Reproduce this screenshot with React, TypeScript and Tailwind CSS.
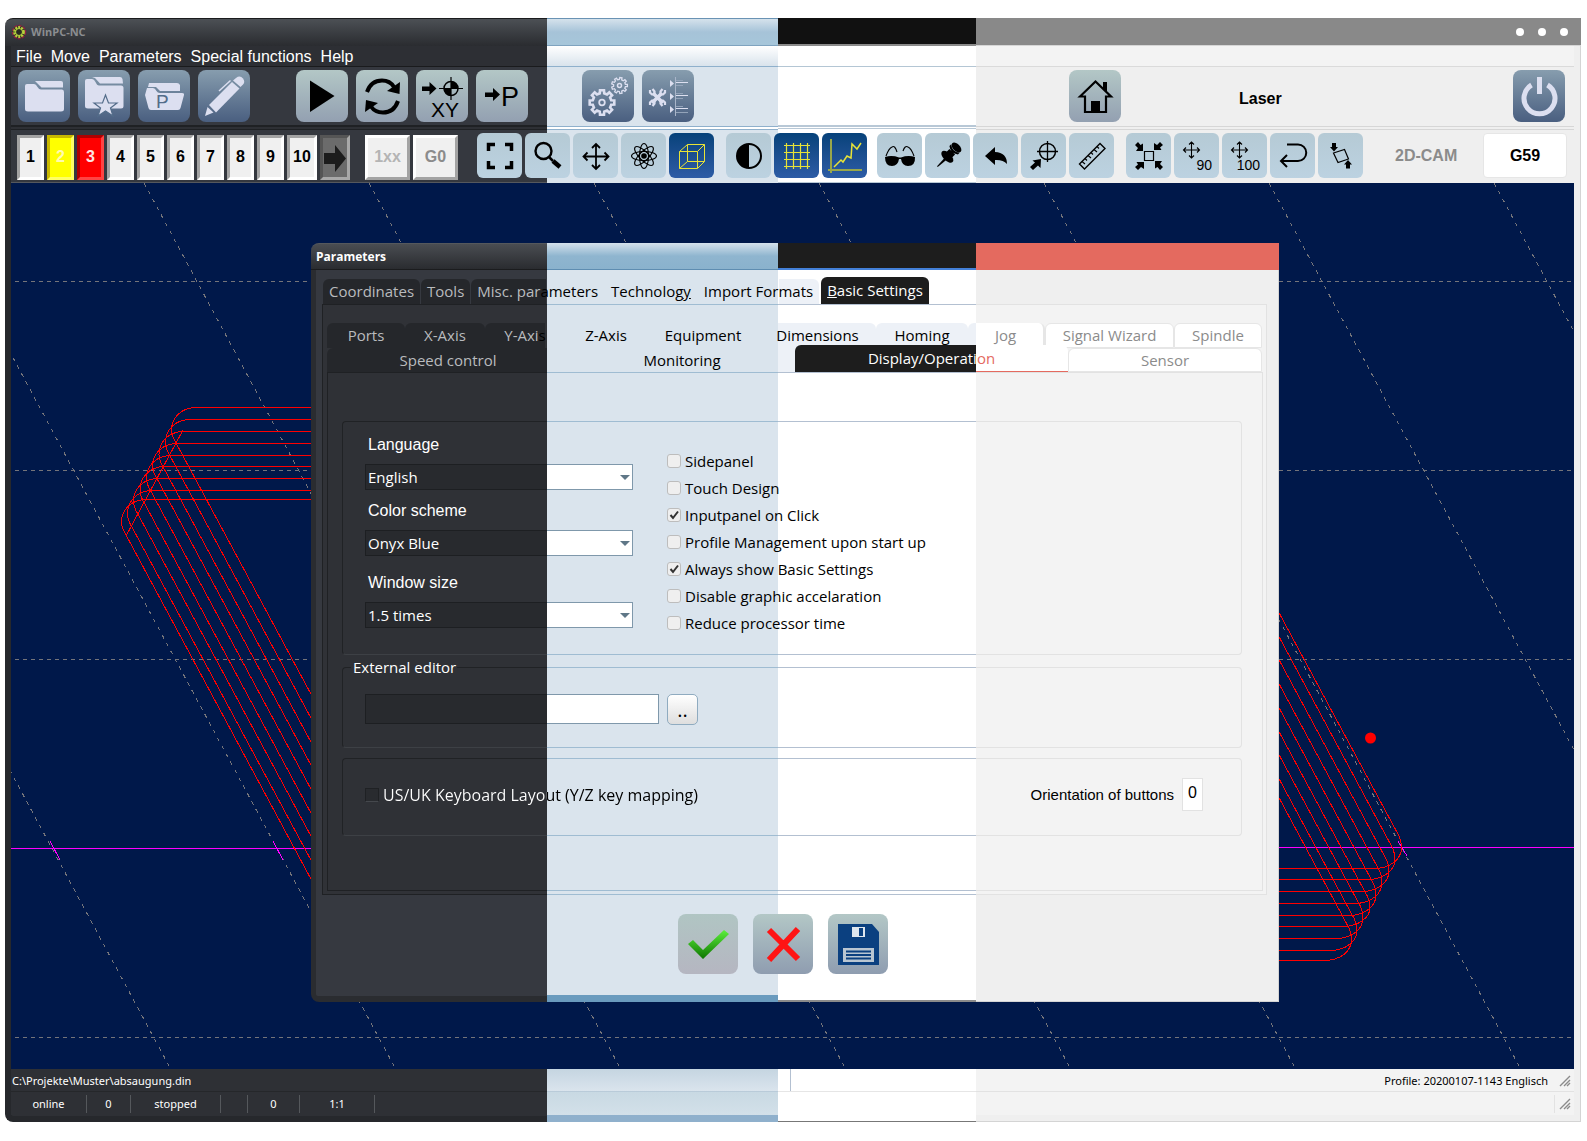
import { useState } from 'react';
import type { ReactNode } from 'react';
import clsx from 'clsx';

type Four = [string, string, string, string];

// A box whose background runs through the four colour schemes from left to right
function Banded({
  cols,
  bands,
  className,
  children,
}: {
  cols: string;
  bands: Four;
  className?: string;
  children?: ReactNode;
}) {
  return (
    <div className="grid grid-cols-1">
      <div className={clsx('col-start-1 row-start-1 grid', cols)}>
        {bands.map((band, i) => (
          <div key={i} className={band} />
        ))}
      </div>
      <div className={clsx('col-start-1 row-start-1 min-w-0', className)}>{children}</div>
    </div>
  );
}

const WINDOW_COLS = 'grid-cols-[542px_231px_198px_1fr]';
const BODY_COLS = 'grid-cols-[536px_231px_198px_1fr]';
const DIALOG_COLS = 'grid-cols-[236px_231px_198px_1fr]';
const TABS_COLS = 'grid-cols-[225px_231px_198px_1fr]';
const PAGE_COLS = 'grid-cols-[220px_231px_198px_1fr]';
const GROUP_COLS = 'grid-cols-[205px_231px_198px_1fr]';

/* ---------- icons ---------- */

const LIGHT = '#dcdff0';
const YELLOW = '#e8e337';

function Icon({ size, children }: { size: number; children: ReactNode }) {
  return (
    <svg width={size} height={size} viewBox={`0 0 ${size} ${size}`} fill="none" aria-hidden="true">
      {children}
    </svg>
  );
}

function gearPath(cx: number, cy: number, outer: number, inner: number, teeth: number) {
  const points: string[] = [];
  const step = (Math.PI * 2) / teeth;
  for (let i = 0; i < teeth; i++) {
    const a = i * step;
    const corners = [
      [inner, a - step * 0.3],
      [outer, a - step * 0.2],
      [outer, a + step * 0.2],
      [inner, a + step * 0.3],
    ];
    corners.forEach(([r, t]) => points.push(`${(cx + r * Math.cos(t)).toFixed(1)} ${(cy + r * Math.sin(t)).toFixed(1)}`));
  }
  return `M${points.join('L')}Z`;
}

const openIcon = (
  <Icon size={52}>
    <path d="M17 11H43Q45 11 45 13V17.500H23.500L17.500 11.500Z" fill={LIGHT} />
    <path d="M9 14H16Q18 14 19.500 17Q21 19.500 23 19.500H44Q46 19.500 46 22V39Q46 41.500 43 41.500H10Q7 41.500 7 39V16Q7 14 9 14Z" fill={LIGHT} />
  </Icon>
);

const favouriteIcon = (
  <Icon size={52}>
    <path d="M14 7H42Q44 7 44.500 9L45 13.500H22L17 8Z" fill={LIGHT} />
    <path d="M9 9H14Q16 9 17.500 12Q19 15.500 21 15.500H43Q45.500 15.500 45.500 18V36Q45.500 38.500 43 38.500H10Q7 38.500 7 36V11Q7 9 9 9Z" fill={LIGHT} />
    <path d="M27.500 25L30.500 33H39L32.500 38L35 46L27.500 41L20 46L22.500 38L16 33H24.500Z" fill={LIGHT} stroke="#536c89" strokeWidth="1.200" />
  </Icon>
);

const projectIcon = (
  <Icon size={52}>
    <path d="M11 13H39Q41 13 42 15V21H22L18 17H10Z" fill={LIGHT} />
    <path d="M9 18H15Q17 18 18.500 21Q19.500 23 22 23H44Q46.500 23 46 25L42.500 38Q42 40 40 40H13Q11 40 10.500 38L7 25Z" fill={LIGHT} />
    <text x="18" y="38" fontSize="19" fontFamily="Liberation Sans, sans-serif" fill="#536c89">P</text>
  </Icon>
);

const editIcon = (
  <Icon size={52}>
    <path d="M7 46L9.500 37L15.500 42.500Z" fill={LIGHT} />
    <path d="M11 35L34 12L41.500 18.500L18 42.500Z" fill={LIGHT} />
    <path d="M35 10.500L38 8Q42 5 45 8.500Q47.500 12 45 14.500L42.500 17Z" fill={LIGHT} />
    <path d="M21 21L32.500 10.500" stroke={LIGHT} strokeWidth="1.500" />
  </Icon>
);

const playIcon = (
  <Icon size={52}>
    <path d="M14 10.500L38.500 26L14 42Z" fill="#000" />
  </Icon>
);

const repeatIcon = (
  <Icon size={52}>
    <path d="M11 22Q15 10.500 26 10.500Q34 10.500 38 17" stroke="#000" strokeWidth="4" />
    <path d="M44 12L43.500 24L31 21Z" fill="#000" />
    <path d="M42 31Q38 42.500 27 42.500Q19 42.500 15 36.500" stroke="#000" strokeWidth="4" />
    <path d="M9 42L10 30L22 33Z" fill="#000" />
  </Icon>
);

const zeroXyIcon = (
  <Icon size={52}>
    <path d="M6 16.500H13.500V12L20.500 18.500L13.500 25V21H6Z" fill="#000" />
    <circle cx="35" cy="18.500" r="7" stroke="#000" strokeWidth="1.500" />
    <path d="M35 7V30M23 18.500H47" stroke="#000" strokeWidth="1.200" />
    <path d="M35 18.500V11.500A7 7 0 0 1 42 18.500ZM35 18.500V25.500A7 7 0 0 1 28 18.500Z" fill="#000" />
    <text x="15" y="47" fontSize="21" fontFamily="Liberation Sans, sans-serif" fill="#000">XY</text>
  </Icon>
);

const parkIcon = (
  <Icon size={52}>
    <path d="M9 22.500H17V18L24 24.500L17 31V27H9Z" fill="#000" />
    <text x="25" y="36" fontSize="27" fontFamily="Liberation Sans, sans-serif" fill="#000">P</text>
  </Icon>
);

const gearsIcon = (
  <Icon size={52}>
    <path d={gearPath(20, 32.5, 12.5, 9.5, 8)} stroke={LIGHT} strokeWidth="2.600" />
    <circle cx="20" cy="32.500" r="2.800" stroke={LIGHT} strokeWidth="1.800" />
    <path d={gearPath(37.5, 15.5, 8, 6, 9)} stroke={LIGHT} strokeWidth="1.300" />
    <circle cx="37.500" cy="15.500" r="2" stroke={LIGHT} strokeWidth="1.500" />
  </Icon>
);

const setupIcon = (
  <Icon size={52}>
    <path d="M11 23L21 33M20 23L10 33" stroke={LIGHT} strokeWidth="3.500" />
    <path d="M8 20V22.500L10 24.500H12.500V21.500L10.500 19M23 20V22.500L21 24.500H18.500V21.500L20.500 19M8 35V32.500L10 30.500H12.500V33.500L10.500 36M23 35V32.500L21 30.500H18.500V33.500L20.500 36" stroke={LIGHT} strokeWidth="2.200" />
    <path d="M33.500 7V46" stroke="#a9b5c9" strokeWidth="1" />
    <path d="M28 10L32 13.500L28 17ZM28 23L32 26.500L28 30ZM28 36L32 39.500L28 43Z" fill={LIGHT} />
    <path d="M34 12.500H46M34 25.500H46M34 38.500H46" stroke={LIGHT} />
    <path d="M34 10.500H41M34 15.500H41M34 23.500H41M34 28.500H41M34 36.500H41M34 42.500H46" stroke="#93a3b9" />
  </Icon>
);

const homeIcon = (
  <Icon size={52}>
    <path d="M11 26.500L26.500 11.500L42 26.500H37V42H16V26.500Z" stroke="#000" strokeWidth="2.200" />
    <path d="M34 12H38V22L34 18ZM22 31H31V42H22Z" fill="#000" />
  </Icon>
);

const powerIcon = (
  <Icon size={52}>
    <path d="M18.500 15A15.500 15.500 0 1 0 34.500 15" stroke={LIGHT} strokeWidth="5" />
    <path d="M24 7H29V24H24Z" fill={LIGHT} />
  </Icon>
);

const fitIcon = (
  <Icon size={45}>
    <path d="M11.500 18V11.500H18M28 11.500H34.500V18M34.500 28V34.500H28M18 34.500H11.500V28" stroke="#000" strokeWidth="3.500" />
  </Icon>
);

const zoomIcon = (
  <Icon size={45}>
    <circle cx="18.500" cy="18" r="8" stroke="#000" strokeWidth="2.400" />
    <path d="M24 24L28 28" stroke="#000" strokeWidth="2.500" />
    <path d="M28 28L35 34" stroke="#000" strokeWidth="4.500" />
  </Icon>
);

const moveIcon = (
  <Icon size={45}>
    <path d="M23 11V36M10.500 23.500H35.500M19 15L23 11L27 15M19 32L23 36L27 32M14.500 19.500L10.500 23.500L14.500 27.500M31.500 19.500L35.500 23.500L31.500 27.500" stroke="#000" strokeWidth="1.800" />
  </Icon>
);

const atomIcon = (
  <Icon size={45}>
    {[0, 45, 90, 135].map((angle) => (
      <ellipse key={angle} cx="23" cy="23" rx="12.500" ry="4.500" stroke="#000" strokeWidth="1.100" transform={`rotate(${angle} 23 23)`} />
    ))}
    <circle cx="23" cy="23" r="2.800" fill="#000" />
    <circle cx="23" cy="23" r="5" stroke="#000" strokeWidth="1" />
  </Icon>
);

const cubeIcon = (
  <Icon size={45}>
    <path d="M10.500 18.500H28.500V35.500H10.500ZM18.500 11.500H35.500V28.500H18.500ZM10.500 18.500L18.500 11.500M28.500 18.500L35.500 11.500M28.500 35.500L35.500 28.500M10.500 35.500L18.500 28.500" stroke={YELLOW} />
  </Icon>
);

const contrastIcon = (
  <Icon size={45}>
    <circle cx="23" cy="23" r="12" stroke="#000" strokeWidth="2" />
    <path d="M23 11V35A12 12 0 0 1 23 11Z" fill="#000" />
  </Icon>
);

const gridIcon = (
  <Icon size={45}>
    <path d="M12.500 10V36M19.500 10V36M26.500 10V36M33.500 10V36M10 12.500H36M10 19.500H36M10 26.500H36M10 33.500H36" stroke={YELLOW} strokeWidth="1.200" />
  </Icon>
);

const chartIcon = (
  <Icon size={45}>
    <path d="M9 6V40M6 37H40" stroke="#99a74a" strokeWidth="2" />
    <path d="M12 34L15 31L19 27L21 29L25 23L29 25L30 11L35 16L39 10" stroke={YELLOW} strokeWidth="1.500" />
  </Icon>
);

const glassesIcon = (
  <Icon size={45}>
    <path d="M8 24Q15 22 22 24.500H24Q31 22 38 24Q38.500 33 31 33Q25 33 24 26H22Q21 33 15 33Q8 33 8 24Z" fill="#000" />
    <path d="M9 23Q12 15 15 14Q18 12 20 19M37 23Q34 15 31 14Q28 12 26 18" stroke="#000" strokeWidth="1.100" />
  </Icon>
);

const pinIcon = (
  <Icon size={45}>
    <g transform="rotate(45 23 23)" fill="#000">
      <ellipse cx="23" cy="11" rx="6" ry="3.500" />
      <path d="M17 12.500Q23 17.500 29 12.500V15Q23 19.500 17 15ZM19 17H27V23H19Z" />
      <ellipse cx="23" cy="24" rx="7.500" ry="4" />
      <path d="M22 27H24.500L23.500 38H22.500Z" />
    </g>
  </Icon>
);

const undoIcon = (
  <Icon size={45}>
    <path d="M12 23L22 14V19Q34 19.500 34 31Q30 26.500 22 27V32Z" fill="#000" />
  </Icon>
);

const targetIcon = (
  <Icon size={45}>
    <circle cx="26.500" cy="18.500" r="8" stroke="#000" strokeWidth="1.500" />
    <path d="M26.500 8V29M16 18.500H37" stroke="#000" strokeWidth="1.300" />
    <path d="M9 34L14 29.500L11.500 27.500L20 26L19.500 35L17 32.500L12 37Z" fill="#000" />
  </Icon>
);

const rulerIcon = (
  <Icon size={45}>
    <path d="M10.500 31L31 10.500L36 15.500L15.500 36Z" stroke="#000" strokeWidth="1.400" />
    <path d="M13 28.500L16 31M16 25.500L18 27.500M19 22.500L22 25M22 19.500L24 21.500M25 16.500L28 19M28 13.500L30 15.500" stroke="#000" strokeWidth="1.100" />
  </Icon>
);

const shrinkIcon = (
  <Icon size={45}>
    <path d="M18.500 18.500H27.500V27.500H18.500Z" stroke="#000" strokeWidth="1.200" />
    {[0, 90, 180, 270].map((angle) => (
      <path key={angle} d="M9 12L12 9L14.500 12L17 10.500V18H10L12 15Z" fill="#000" transform={`rotate(${angle} 23 23)`} />
    ))}
  </Icon>
);

function StepIcon({ label }: { label: string }) {
  return (
    <Icon size={45}>
      <path d="M17.500 9V25M9.500 17H25.500M15 11.500L17.500 9L20 11.500M15 22.500L17.500 25L20 22.500M12 14.500L9.500 17L12 19.500M23 14.500L25.500 17L23 19.500" stroke="#000" strokeWidth="1.100" />
      <text x="38" y="37" textAnchor="end" fontSize="14" fontFamily="Liberation Sans, sans-serif" fill="#000">{label}</text>
    </Icon>
  );
}

const returnIcon = (
  <Icon size={45}>
    <path d="M17 11.500H28A8 8 0 0 1 28 28H11M17 22L11 28L17 34" stroke="#000" strokeWidth="2" />
  </Icon>
);

const alignIcon = (
  <Icon size={45}>
    <path d="M15.500 20L26.500 16.500L30.500 26L20 29.500Z" stroke="#000" strokeWidth="1.200" />
    <path d="M14 10H18V14H20L16 18.500L12 14H14ZM28 35.500H32V31.500H34L30 27L26 31.500H28Z" fill="#000" />
  </Icon>
);

/* ---------- toolbar parts ---------- */

function BigButton({ label, tone, className, children }: { label: string; tone: 'slate' | 'pale'; className?: string; children: ReactNode }) {
  return (
    <button
      type="button"
      aria-label={label}
      className={clsx(
        'size-[52px] shrink-0 rounded-lg bg-linear-to-b',
        tone === 'slate' ? 'from-[#879dae] to-[#4a5f80]' : 'from-[#b3c7c6] to-[#93a0b1]',
        className,
      )}
    >
      {children}
    </button>
  );
}

function SmallButton({ label, active, children }: { label: string; active?: boolean; children: ReactNode }) {
  return (
    <button
      type="button"
      aria-label={label}
      aria-pressed={active}
      className={clsx(
        'size-[45px] shrink-0 rounded-md bg-linear-to-b',
        active ? 'from-[#06427a] to-[#2d5ca6]' : 'from-[#b5cad5] to-[#bcd2e1]',
      )}
    >
      {children}
    </button>
  );
}

const TOOLS = ['1', '2', '3', '4', '5', '6', '7', '8', '9', '10'];

function toolStyle(tool: string) {
  if (tool === '2') return 'w-[27px] border-t-[#c9b800] border-l-[#c9b800] border-r-[#ffff66] border-b-[#ffff66] bg-[#ff0] text-[#fffbb0]';
  if (tool === '3') return 'w-[27px] border-t-[#b00000] border-l-[#b00000] border-r-[#ff4444] border-b-[#ff4444] bg-[#f00] text-[#ffe5e5]';
  return clsx(tool === '10' ? 'w-[30px]' : 'w-[27px]', 'border-t-[#a3a3a3] border-l-[#a3a3a3] border-r-white border-b-white bg-[#f0f0f0] text-black');
}

const VIEW_GROUPS = [
  {
    margin: 'ml-[19px]',
    buttons: [
      { label: 'Fit to window', icon: fitIcon },
      { label: 'Zoom', icon: zoomIcon },
      { label: 'Pan', icon: moveIcon },
      { label: 'Orbit', icon: atomIcon },
      { label: '3D view', icon: cubeIcon, active: true },
    ],
  },
  {
    margin: 'ml-[12px]',
    buttons: [
      { label: 'Contrast', icon: contrastIcon },
      { label: 'Grid', icon: gridIcon, active: true },
      { label: 'Path', icon: chartIcon, active: true },
    ],
  },
  {
    margin: 'ml-[10px]',
    buttons: [
      { label: 'Preview', icon: glassesIcon },
      { label: 'Pin', icon: pinIcon },
      { label: 'Undo', icon: undoIcon },
      { label: 'Go to point', icon: targetIcon },
      { label: 'Measure', icon: rulerIcon },
    ],
  },
  {
    margin: 'ml-[12px]',
    buttons: [
      { label: 'Centre', icon: shrinkIcon },
      { label: 'Step 90', icon: <StepIcon label="90" /> },
      { label: 'Step 100', icon: <StepIcon label="100" /> },
      { label: 'Return', icon: returnIcon },
      { label: 'Align', icon: alignIcon },
    ],
  },
];

function TitleBar() {
  return (
    <Banded
      cols={WINDOW_COLS}
      bands={[
        'rounded-tl-lg border-t border-[#1b1c1e] bg-linear-to-b from-[#4c5055] to-[#2a2c30]',
        'border-y border-t-[#6a93b4] border-b-[#7fa3bf] bg-linear-to-b from-[#d5e2ec] via-[#a6c3d8] to-[#a6c6da]',
        'border-b-2 border-[#8b8b8b] bg-[#111]',
        'border-b border-[#d6d6d6] bg-[#898989]',
      ]}
      className="flex h-[28px] items-center pr-[13px] pl-[6px]"
    >
      <svg width="16" height="16" viewBox="0 0 16 16" fill="none" aria-hidden="true">
        <circle cx="8" cy="8" r="6.500" fill="#2a2c22" stroke="#8f1f45" strokeWidth="1.500" strokeDasharray="3 1.200" />
        <circle cx="8" cy="8" r="4.600" stroke="#b5cf3c" strokeWidth="2.600" strokeDasharray="2 .900" />
        <circle cx="8" cy="8" r="3.500" stroke="#b5cf3c" strokeWidth="1" />
      </svg>
      <h1 className="ml-[4px] font-['Open_Sans',sans-serif] text-[11px] font-bold text-[#8b8d90]">WinPC-NC</h1>
      <div className="ml-auto flex gap-[14px]">
        <button type="button" aria-label="Minimize" className="size-[8px] rounded-full bg-white" />
        <button type="button" aria-label="Maximize" className="size-[8px] rounded-full bg-white" />
        <button type="button" aria-label="Close" className="size-[8px] rounded-full bg-white" />
      </div>
    </Banded>
  );
}

function MenuBar() {
  return (
    <Banded
      cols={BODY_COLS}
      bands={[
        'border-b border-[#1a1b1d] bg-[#2d2f34]',
        'border-b border-[#8fb0cc] bg-linear-to-b from-white to-[#d9e3ec]',
        'border-b border-[#b4c6d4] bg-white',
        'border-b border-[#dadada] bg-[#f3f3f3]',
      ]}
      className="flex h-[21px] items-center gap-[9px] pl-[5px] text-[16px] leading-5 text-white"
    >
      {['File', 'Move', 'Parameters', 'Special functions', 'Help'].map((item) => (
        <button key={item} type="button">{item}</button>
      ))}
    </Banded>
  );
}

function MainToolbar() {
  return (
    <Banded
      cols={BODY_COLS}
      bands={[
        'border-b-2 border-[#1f2124] bg-[#35383f]',
        'border-b border-[#8fb0cc] bg-[#dae4ed]',
        'border-b-2 border-[#b8c8d6] bg-white',
        'border-b border-[#d6d6d6] bg-[#efefef]',
      ]}
      className="flex h-[60px] items-start gap-2 pt-[3px] pr-[9px] pl-[7px]"
    >
      <BigButton label="Open file" tone="slate">{openIcon}</BigButton>
      <BigButton label="Favourites" tone="slate">{favouriteIcon}</BigButton>
      <BigButton label="Open project" tone="slate">{projectIcon}</BigButton>
      <BigButton label="Edit" tone="slate">{editIcon}</BigButton>
      <BigButton label="Start" tone="pale" className="ml-[38px]">{playIcon}</BigButton>
      <BigButton label="Repeat" tone="pale">{repeatIcon}</BigButton>
      <BigButton label="Zero point XY" tone="pale">{zeroXyIcon}</BigButton>
      <BigButton label="Park position" tone="pale">{parkIcon}</BigButton>
      <BigButton label="Settings" tone="slate" className="ml-[46px]">{gearsIcon}</BigButton>
      <BigButton label="Setup" tone="slate">{setupIcon}</BigButton>
      <BigButton label="Home" tone="pale" className="ml-[367px]">{homeIcon}</BigButton>
      <p className="ml-[110px] self-center text-[16px] font-bold text-black">Laser</p>
      <BigButton label="Power" tone="slate" className="ml-auto">{powerIcon}</BigButton>
    </Banded>
  );
}

function ViewToolbar() {
  return (
    <Banded
      cols={BODY_COLS}
      bands={[
        'mt-[2px] border-y border-t-[#1f2124] border-b-[#55585e] bg-[#35383f]',
        'mt-[2px] border-t border-[#8fb0cc] bg-[#dae4ed]',
        'mt-[1px] border-y border-t-[#b8c8d6] border-b-[#b8c8d6] bg-white',
        'mt-[2px] border-t border-[#d6d6d6] bg-[#efefef]',
      ]}
      className="flex h-[56px] items-start pt-[6px] pr-[7px] pl-[6px]"
    >
      <div className="mt-[2px] flex gap-[3px]">
        {TOOLS.map((tool) => (
          <button key={tool} type="button" className={clsx('h-[45px] shrink-0 border-[3px] pb-[2px] text-[16px] font-bold', toolStyle(tool))}>
            <span className="flex justify-center">{tool}</span>
          </button>
        ))}
        <button type="button" aria-label="Next tools" className="h-[45px] w-[30px] shrink-0 border-[3px] border-[#555] border-r-[#a8a8a8] border-b-[#a8a8a8] bg-[#6b6b6b]">
          <svg width="24" height="36" viewBox="0 0 24 36" aria-hidden="true">
            <path d="M1 13H12V5L23 18.500L12 32V24H1Z" fill="#1c1c1c" />
          </svg>
        </button>
      </div>
      <div className="mt-[2px] ml-[15px] flex gap-[3px]">
        <button type="button" className="h-[45px] w-[45px] border-[3px] border-white border-r-[#a3a3a3] border-b-[#a3a3a3] bg-[#f0f0f0] pb-[2px] text-[16px] font-bold text-[#b4b4b4]">1xx</button>
        <button type="button" className="h-[45px] w-[45px] border-[3px] border-white border-r-[#a3a3a3] border-b-[#a3a3a3] bg-[#f0f0f0] pb-[2px] text-[16px] font-bold text-[#8b8b8b]">G0</button>
      </div>
      {VIEW_GROUPS.map((group) => (
        <div key={group.buttons[0].label} className={clsx('flex gap-[3px]', group.margin)}>
          {group.buttons.map((button) => (
            <SmallButton key={button.label} label={button.label} active={'active' in button ? button.active : undefined}>
              {button.icon}
            </SmallButton>
          ))}
        </div>
      ))}
      <button type="button" className="ml-[32px] h-[45px] text-[16px] font-bold text-[#8b8b8b]">2D-CAM</button>
      <button type="button" className="ml-auto h-[45px] w-[84px] rounded-sm border border-[#e6e6e6] bg-white text-[16px] font-bold text-black">G59</button>
    </Banded>
  );
}

/* ---------- machine view ---------- */

const SLOPE = 0.538;
const ROWS = [281.5, 470.5, 659.5, 1037.5];
const COLUMNS = [-306, -81, 144, 369, 594, 819, 1044, 1269, 1494];

// [y of the straight run, outermost x of the curve, y where the slanted run meets the dialog]
const LEFT_RUNS = [
  [407.5, 171.5, 692],
  [419.5, 165.5, 716],
  [431.5, 159, 740],
  [443.5, 152.5, 763],
  [455.5, 146.5, 787],
  [466.5, 140, 811],
  [478.5, 133.5, 834],
  [490.5, 127.5, 858],
  [499.5, 121.5, 877],
];

const RIGHT_RUNS = [
  [868.5, 1401.5, 613],
  [879.5, 1395, 637],
  [891.5, 1389, 660],
  [903.5, 1382, 684],
  [915.5, 1376, 708],
  [926.5, 1370, 732],
  [938.5, 1363, 755],
  [950.5, 1357, 779],
  [960.5, 1351.5, 798],
];

function leftRun([y, x, end]: number[]) {
  const bend = end - (305 - x) / SLOPE;
  return `M312 ${y}H${x + 25}C${x + 8} ${y} ${x} ${y + 12} ${x} ${bend - 14}Q${x} ${bend - 8} ${x + 5} ${bend}L312 ${end + 4}`;
}

function rightRun([y, x, start]: number[]) {
  const bend = start + (x - 5 - 1279) / SLOPE;
  return `M1277 ${start - 4}L${x - 5} ${bend}Q${x} ${bend + 8} ${x} ${bend + 16}C${x} ${y - 10} ${x - 10} ${y} ${x - 28} ${y}H1277`;
}

function MachineView() {
  return (
    <svg viewBox="11 183 1563 886" preserveAspectRatio="none" className="col-start-1 row-start-1 h-full w-full" role="img" aria-label="Tool path">
      <g stroke="#74747a" shapeRendering="crispEdges">
        {ROWS.map((y) => (
          <path key={y} d={`M15 ${y}H1574`} strokeDasharray="4 4" />
        ))}
        {COLUMNS.map((x) => (
          <path key={x} d={`M${x} 183L${x + 886 * SLOPE} 1069`} strokeDasharray="4 5" />
        ))}
      </g>
      <g stroke="#f0f" shapeRendering="crispEdges">
        <path d="M11 848.500H320M1270 847.500H1574" />
        <path d="M50 841L60 860M273 841L283 860M1398 841L1407 856" />
      </g>
      <g stroke="#f00" fill="none" shapeRendering="crispEdges">
        {LEFT_RUNS.map((run) => (
          <path key={run[0]} d={leftRun(run)} />
        ))}
        {RIGHT_RUNS.map((run) => (
          <path key={run[0]} d={rightRun(run)} />
        ))}
        <path d="M183 430L126 536" />
      </g>
      <circle cx="1370.500" cy="738" r="5.500" fill="#f00" />
    </svg>
  );
}

/* ---------- dialog ---------- */

const MAIN_TABS = [
  { name: 'Coordinates', label: 'Coordinates', style: 'rounded-t-md bg-[#25272b] text-[#b9bbbe]' },
  { name: 'Tools', label: 'Tools', style: 'rounded-t-md bg-[#25272b] text-[#b9bbbe]' },
  {
    name: 'Misc. parameters',
    label: <><span className="text-[#b9bbbe]">Misc. par</span>ameters</>,
    style: 'rounded-tl-md bg-[linear-gradient(to_right,#25272b_75px,transparent_75px)] text-black',
  },
  { name: 'Technology', label: <>Technolog<u>y</u></>, style: 'text-black' },
  { name: 'Import Formats', label: 'Import Formats', style: 'rounded-tr-md bg-[linear-gradient(to_right,transparent_81px,#edf1f7_81px)] text-black' },
];

const AXIS_TABS = [
  { name: 'Ports', label: 'Ports', style: 'rounded-t-md bg-[#25272b] text-[#b9bbbe]' },
  { name: 'X-Axis', label: 'X-Axis', style: 'rounded-t-md bg-[#25272b] text-[#b9bbbe]' },
  {
    name: 'Y-Axis',
    label: <><span className="text-[#b9bbbe]">Y-Axi</span>s</>,
    style: 'rounded-tl-md bg-[linear-gradient(to_right,#25272b_60px,transparent_60px)] text-black',
  },
  { name: 'Z-Axis', label: 'Z-Axis', style: 'text-black' },
  { name: 'Equipment', label: 'Equipment', style: 'text-black' },
  { name: 'Dimensions', label: 'Dimensions', style: 'rounded-tr-md bg-[linear-gradient(to_right,transparent_19px,#edf1f7_19px)] text-black' },
  { name: 'Homing', label: 'Homing', style: 'rounded-t-md bg-[#edf1f7] text-black' },
  { name: 'Jog', label: 'Jog', style: 'rounded-t-md border-r-2 border-[#e6e6e6] bg-[linear-gradient(to_right,#edf1f7_8px,#fff_8px)] text-[#8b8b8b]' },
  { name: 'Signal Wizard', label: 'Signal Wizard', style: 'rounded-t-md border border-[#e6e6e6] bg-white text-[#8b8b8b]' },
  { name: 'Spindle', label: 'Spindle', style: 'rounded-t-md border border-[#e6e6e6] bg-white text-[#8b8b8b]' },
];

const CHECKS = [
  { label: 'Sidepanel', on: false },
  { label: 'Touch Design', on: false },
  { label: 'Inputpanel on Click', on: true },
  { label: 'Profile Management upon start up', on: false },
  { label: 'Always show Basic Settings', on: true },
  { label: 'Disable graphic accelaration', on: false },
  { label: 'Reduce processor time', on: false },
];

const GROUP_BANDS: Four = [
  'rounded-l-sm border border-r-0 border-[#202225] border-b-[#3d4045]',
  'border-y border-[#9fbcd2]',
  'border-y border-[#b3c0d1]',
  'rounded-r-sm border border-l-0 border-[#e2e2e2]',
];

function CheckOption({ label, on }: { label: string; on: boolean }) {
  const [checked, setChecked] = useState(on);
  return (
    <label className="flex h-[27px] items-center gap-[4px]">
      <span className="grid">
        <input
          type="checkbox"
          checked={checked}
          onChange={(e) => setChecked(e.target.checked)}
          className="peer col-start-1 row-start-1 size-[14px] appearance-none rounded-[3px] border border-[#bdbdbd] bg-[#efefef]"
        />
        <svg viewBox="0 0 14 14" className="pointer-events-none invisible col-start-1 row-start-1 size-[14px] peer-checked:visible" aria-hidden="true">
          <path d="M3.500 7L6 10L11 3.500" fill="none" stroke="#333" strokeWidth="2" />
        </svg>
      </span>
      {label}
    </label>
  );
}

function Choice({ id, label, value, className }: { id: string; label: string; value: string; className?: string }) {
  return (
    <div className={className}>
      <label htmlFor={id} className="ml-[3px] block font-['Liberation_Sans',sans-serif] text-[16px] leading-5 text-white">{label}</label>
      <div className="mt-[9px] grid w-[268px] items-center bg-[linear-gradient(to_right,#282a2e_182px,#fff_182px)]">
        <select
          id={id}
          defaultValue={value}
          className="col-start-1 row-start-1 h-[26px] appearance-none border border-[#7f98ab] bg-transparent pb-px pl-[2px] text-[15px] leading-5 text-white [border-image:linear-gradient(to_right,#1d1f22_182px,#7f98ab_182px)_1]"
        >
          <option>{value}</option>
        </select>
        <svg width="10" height="5" viewBox="0 0 10 5" className="pointer-events-none col-start-1 row-start-1 mr-[3px] justify-self-end" aria-hidden="true">
          <path d="M0 0H10L5 5Z" fill="#5f7787" />
        </svg>
      </div>
    </div>
  );
}

function SettingsPage() {
  return (
    <Banded
      cols={PAGE_COLS}
      bands={[
        'border border-r-0 border-[#1f2124] bg-[#2f3136]',
        'border-y border-[#9fbcd2] bg-[#dae4ed]',
        'border-y border-[#b3c0d1] bg-white',
        'border border-l-0 border-[#e2e2e2] bg-[#f3f3f3]',
      ]}
      className="flex flex-col pt-[49px] pr-[21px] pb-[55px] pl-[15px]"
    >
      <Banded cols={GROUP_COLS} bands={GROUP_BANDS} className="flex h-[234px] pl-[23px]">
        <div className="w-[302px]">
          <Choice id="language" label="Language" value="English" className="pt-[14px]" />
          <Choice id="scheme" label="Color scheme" value="Onyx Blue" className="pt-[11px]" />
          <Choice id="size" label="Window size" value="1.5 times" className="pt-[17px]" />
        </div>
        <div className="pt-[26px] text-black">
          {CHECKS.map((check) => (
            <CheckOption key={check.label} {...check} />
          ))}
        </div>
      </Banded>

      <div className="h-[12px]" />

      <Banded cols={GROUP_COLS} bands={GROUP_BANDS} className="h-[81px] pl-[9px]">
        <label htmlFor="editor" className="-mt-[12px] block w-fit bg-[#2f3136] pr-px pl-[2px] leading-6 text-white">External editor</label>
        <div className="mt-[15px] ml-[14px] flex gap-2">
          <input
            id="editor"
            type="text"
            className="h-[30px] w-[294px] border border-[#7f98ab] bg-[linear-gradient(to_right,#282a2e_181px,#fff_181px)] px-1 text-white [border-image:linear-gradient(to_right,#1d1f22_182px,#7f98ab_182px)_1]"
          />
          <button type="button" className="h-[31px] w-[31px] rounded-[5px] border border-[#8fabc0] bg-linear-to-b from-white to-[#dedede] text-[20px] text-black">..</button>
        </div>
      </Banded>

      <div className="h-[10px]" />

      <Banded cols={GROUP_COLS} bands={GROUP_BANDS} className="flex h-[78px] items-center justify-between pr-[39px] pb-[5px] pl-[23px]">
        <label className="flex items-center gap-[4px]">
          <input type="checkbox" className="size-[14px] appearance-none border border-[#1f2124] border-b-[#45484d] bg-[#292b2f]" />
          <span className="bg-[linear-gradient(to_right,#fff_164px,#000_164px)] bg-clip-text text-[16px] text-transparent">US/UK Keyboard Layout (Y/Z key mapping)</span>
        </label>
        <label className="flex items-center gap-[8px] font-['Liberation_Sans',sans-serif] text-[15px] text-black">
          Orientation of buttons
          <input type="text" defaultValue="0" className="h-[33px] w-[21px] border border-[#e2e2e2] bg-white pb-[4px] text-center text-[16px]" />
        </label>
      </Banded>
    </Banded>
  );
}

function ParametersDialog() {
  return (
    <section className="col-start-1 row-start-1 mt-[60px] mr-[295px] mb-[67px] ml-[300px] font-['Open_Sans',sans-serif] text-[15px] leading-[22px]" role="dialog" aria-labelledby="dialog-title">
      <Banded
        cols={DIALOG_COLS}
        bands={[
          'rounded-tl-lg border-t border-b border-t-[#55585c] border-b-[#1b1c1e] bg-linear-to-b from-[#4a4d52] to-[#2a2c30]',
          'border-b border-[#5e8db1] bg-linear-to-b from-[#d5e2ec] via-[#8fb5cf] to-[#8ab2cd]',
          'border-b-2 border-[#4380d8] bg-[#1d1d1d]',
          'bg-[#e46a5f]',
        ]}
        className="flex h-[27px] items-center pl-[5px]"
      >
        <h2 id="dialog-title" className="text-[12px] font-bold text-white">Parameters</h2>
      </Banded>

      <Banded
        cols={DIALOG_COLS}
        bands={[
          'rounded-bl-lg border-b-[6px] border-l-[5px] border-[#2a2c30] bg-[#363940]',
          'border-b-[7px] border-[#6a9bbe] bg-[#dae4ed]',
          'border-b-2 border-[#8b8b8b] bg-white',
          'border-r border-b border-[#d4d4d4] bg-[#efefef]',
        ]}
        className="pt-[7px] pr-[12px] pb-[28px] pl-[11px]"
      >
        <div className="flex items-end gap-px pl-px" role="tablist">
          {MAIN_TABS.map((tab) => (
            <button key={tab.name} type="button" role="tab" className={clsx('h-[25px] px-[6px] pb-[2px]', tab.style)}>{tab.label}</button>
          ))}
          <button type="button" role="tab" aria-selected="true" className="ml-px h-[27px] rounded-t-md bg-[#1d1d1d] px-[6px] pb-[2px] text-white"><u>B</u>asic Settings</button>
        </div>

        <Banded
          cols={TABS_COLS}
          bands={[
            'border border-r-0 border-[#1f2124] bg-[#303237]',
            'border-y border-[#9fbcd2] bg-[#dae4ed]',
            'border-y border-[#b3c0d1] bg-white',
            'border border-l-0 border-[#e2e2e2] bg-[#f3f3f3]',
          ]}
          className="pt-[19px] pr-[4px] pb-[4px] pl-[5px]"
        >
          <div className="grid grid-cols-[78px_80px_80px_82px_112px_117px_92px_77px_129px_1fr] pr-px" role="tablist">
            {AXIS_TABS.map((tab) => (
              <button key={tab.name} type="button" role="tab" className={clsx('h-[25px] pb-px', tab.style)}>{tab.label}</button>
            ))}
          </div>
          <div className="grid grid-cols-[242px_226px_273px_1fr] pr-px" role="tablist">
            <button type="button" role="tab" className="h-[24px] rounded-tl-md bg-[linear-gradient(to_right,#25272b_220px,transparent_220px)] pb-px text-[#b9bbbe]">Speed control</button>
            <button type="button" role="tab" className="h-[24px] bg-[linear-gradient(to_right,transparent_209px,#edf1f7_209px)] pb-px text-black">Monitoring</button>
            <button
              type="button"
              role="tab"
              aria-selected="true"
              className="-mt-[3px] h-[27px] rounded-t-md border-b bg-[linear-gradient(to_right,#1d1d1d_181px,#fff_181px)] text-[#e46a5f] [border-image:linear-gradient(to_right,#1d1d1d_181px,#e46a5f_181px)_1]"
            >
              <span className="text-white">Display/Operati</span>on
            </button>
            <button type="button" role="tab" className="h-[24px] rounded-t-md border border-[#e6e6e6] bg-white pb-px text-[#8b8b8b]">Sensor</button>
          </div>
          <SettingsPage />
        </Banded>

        <div className="flex gap-[15px] pt-[19px] pl-[356px]">
          <button type="button" aria-label="OK" className="size-[60px] rounded-lg bg-linear-to-b from-[#b0c5c3] to-[#b5b6c1]">
            <svg width="60" height="60" viewBox="0 0 60 60" aria-hidden="true">
              <defs>
                <linearGradient id="tick" x1="0" y1="0" x2="0" y2="1">
                  <stop offset="0" stopColor="#5cf03c" />
                  <stop offset="1" stopColor="#0d7400" />
                </linearGradient>
              </defs>
              <path d="M10 30L15 26L25 36L46 16L51 20L25 45Z" fill="url(#tick)" />
            </svg>
          </button>
          <button type="button" aria-label="Cancel" className="size-[60px] rounded-lg bg-linear-to-b from-[#b3c7c6] to-[#8f9db0]">
            <svg width="60" height="60" viewBox="0 0 60 60" aria-hidden="true">
              <path d="M16 16L45 45M45 15L16 46" stroke="#ff1414" strokeWidth="6" />
            </svg>
          </button>
          <button type="button" aria-label="Save" className="size-[60px] rounded-lg bg-linear-to-b from-[#b3c7c6] to-[#8f9db0]">
            <svg width="60" height="60" viewBox="0 0 60 60" aria-hidden="true">
              <path d="M10 10H44L51 18V51H10Z" fill="#0b4080" />
              <path d="M24 13H37V23H24Z" fill="#dfe6ee" />
              <path d="M31 14H35V22H31Z" fill="#0b4080" />
              <path d="M15 34H46V48H15Z" fill="#b9c6d2" />
              <path d="M18 37.500H43M18 41H43M18 44.500H43" stroke="#0b4080" strokeWidth="1.800" />
            </svg>
          </button>
        </div>
      </Banded>
    </section>
  );
}

/* ---------- status bars ---------- */

function Grip() {
  return (
    <svg width="12" height="12" viewBox="0 0 12 12" className="shrink-0" aria-hidden="true">
      <path d="M1 11L11 1M5 11L11 5M8 11L11 8" stroke="#8b8b8b" strokeWidth="1.400" />
    </svg>
  );
}

const STATUS_CELLS = [
  { text: 'online', width: 'w-[76px]' },
  { text: '0', width: 'w-[44px]' },
  { text: 'stopped', width: 'w-[90px]' },
  { text: '', width: 'w-[27px]' },
  { text: '0', width: 'w-[52px]' },
  { text: '1:1', width: 'w-[75px]' },
];

function StatusBars() {
  return (
    <footer className="font-['Noto_Sans',sans-serif] text-[11px] leading-[18px]">
      <Banded
        cols={BODY_COLS}
        bands={[
          'border-b border-[#25272a] bg-[#2e3035]',
          'border-b border-[#b9cbd9] bg-linear-to-b from-[#c5d5e1] to-[#dae4ed]',
          'border-b border-[#e6e6e6] bg-[linear-gradient(to_right,#fff_12px,#b3c0d1_12px,#b3c0d1_13px,#fff_13px)]',
          'border-b border-[#e2e2e2] bg-[#f3f3f3]',
        ]}
        className="flex h-[23px] items-center justify-between pr-[3px] pl-px"
      >
        <p className="text-white">C:\Projekte\Muster\absaugung.din</p>
        <div className="flex items-center gap-[11px]">
          <p className="text-black">Profile: 20200107-1143 Englisch</p>
          <Grip />
        </div>
      </Banded>
      <Banded
        cols={BODY_COLS}
        bands={['bg-[#2e3035]', 'bg-linear-to-b from-[#c8d9e3] to-[#d3e0e9]', 'bg-white', 'bg-[#f3f3f3]']}
        className="flex h-[23px] items-center pr-[3px]"
      >
        {STATUS_CELLS.map((cell, i) => (
          <p key={i} className={clsx('h-[18px] border-r border-[#55585c] text-center text-white', cell.width)}>{cell.text}</p>
        ))}
        <div className="ml-auto flex h-[18px] items-center border-l border-[#e2e2e2] pl-[4px]">
          <Grip />
        </div>
      </Banded>
    </footer>
  );
}

export default function App() {
  return (
    <div className="min-h-screen bg-white pt-[18px] pr-[6px] pb-[19px] pl-[5px] font-['Liberation_Sans',Arial,sans-serif]">
      <TitleBar />
      <Banded
        cols={WINDOW_COLS}
        bands={[
          'rounded-bl-lg border-b-[6px] border-l-[6px] border-[#26282c] bg-[#2e3035]',
          'border-b-[7px] border-[#8fb0cc]',
          'border-b border-[#777] bg-white',
          'border-r border-b border-[#d4d4d4] bg-[#efefef]',
        ]}
        className="pr-[7px] pb-[7px] pl-[6px]"
      >
        <MenuBar />
        <MainToolbar />
        <ViewToolbar />
        <main className="grid grid-cols-1 bg-[#00184a]">
          <div className="col-start-1 row-start-1 grid [contain:size]">
            <MachineView />
          </div>
          <ParametersDialog />
        </main>
        <StatusBars />
      </Banded>
    </div>
  );
}
